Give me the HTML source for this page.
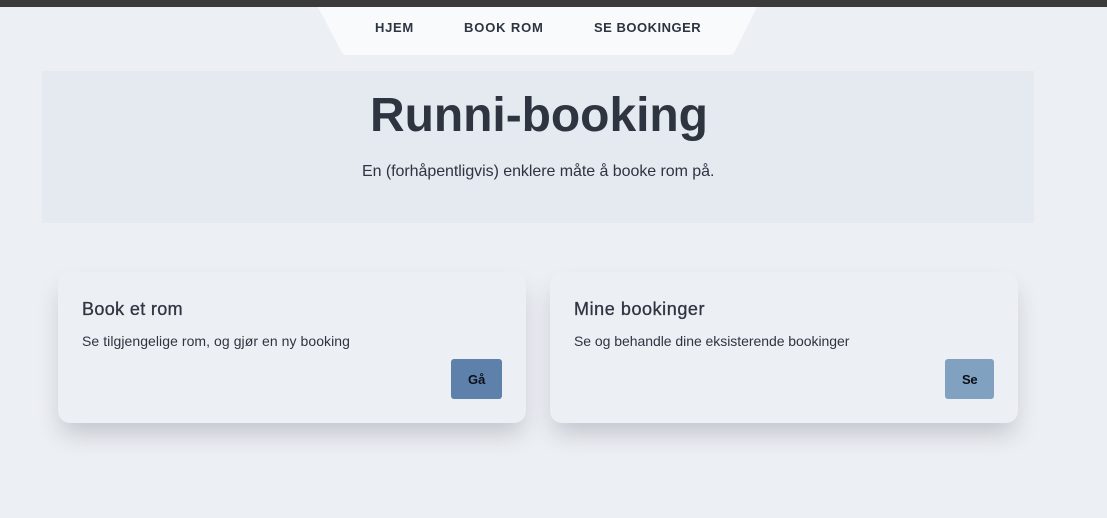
<!DOCTYPE html>
<html lang="no"><head><meta charset="utf-8"><title>Runni-booking</title>
<style>
html,body{margin:0;padding:0;width:1107px;height:518px;overflow:hidden;background:#eceff4;color:#2e3440;font-family:"Liberation Sans",sans-serif}
.a{position:absolute}
.t{position:absolute;white-space:nowrap;line-height:1}
.card{position:absolute;top:272px;width:468px;height:151px;background:#eceff4;border-radius:12px;box-shadow:0 14px 24px -4px rgba(46,52,64,.22)}
.btn{position:absolute;top:359px;height:40px;border-radius:3px}
.h{font-size:18px;-webkit-text-stroke:.3px #2e3440}
</style></head><body>
<div class="a" style="left:0;top:0;width:1107px;height:7px;background:#3b3b3b"></div>
<svg class="a" style="left:0;top:0" width="1107" height="60"><path d="M318 7H757L735 51Q733 55 729 55H347Q343 55 341 51Z" fill="#f8fafc"/></svg>
<div class="t" style="left:375px;top:21px;font-size:13px;font-weight:700;letter-spacing:.7px">HJEM</div>
<div class="t" style="left:464px;top:21px;font-size:13px;font-weight:700;letter-spacing:.85px">BOOK ROM</div>
<div class="t" style="left:594px;top:21px;font-size:13px;font-weight:700;letter-spacing:.5px">SE BOOKINGER</div>
<div class="a" style="left:42px;top:71px;width:992px;height:152px;background:#e5e9f0"></div>
<div class="t" style="left:370px;top:92px;font-size:48px;font-weight:700;letter-spacing:-.05px">Runni-booking</div>
<div class="t" style="left:362px;top:164px;font-size:16px;letter-spacing:-.05px">En (forhåpentligvis) enklere måte å booke rom på.</div>
<div class="card" style="left:58px"></div>
<div class="card" style="left:550px"></div>
<div class="t h" style="left:82px;top:300px;letter-spacing:.36px">Book et rom</div>
<div class="t" style="left:82px;top:334px;font-size:14px;letter-spacing:.06px">Se tilgjengelige rom, og gjør en ny booking</div>
<div class="btn" style="left:451px;width:51px;background:#5e81ac"></div>
<div class="t" style="left:468px;top:373px;font-size:13px;font-weight:700;color:#0b0f17">Gå</div>
<div class="t h" style="left:574px;top:300px;letter-spacing:.57px">Mine bookinger</div>
<div class="t" style="left:574px;top:334px;font-size:14px;letter-spacing:-.04px">Se og behandle dine eksisterende bookinger</div>
<div class="btn" style="left:945px;width:49px;background:#81a1c1"></div>
<div class="t" style="left:962px;top:373px;font-size:13px;font-weight:700;color:#0b0f17;letter-spacing:-.3px">Se</div>
</body></html>
